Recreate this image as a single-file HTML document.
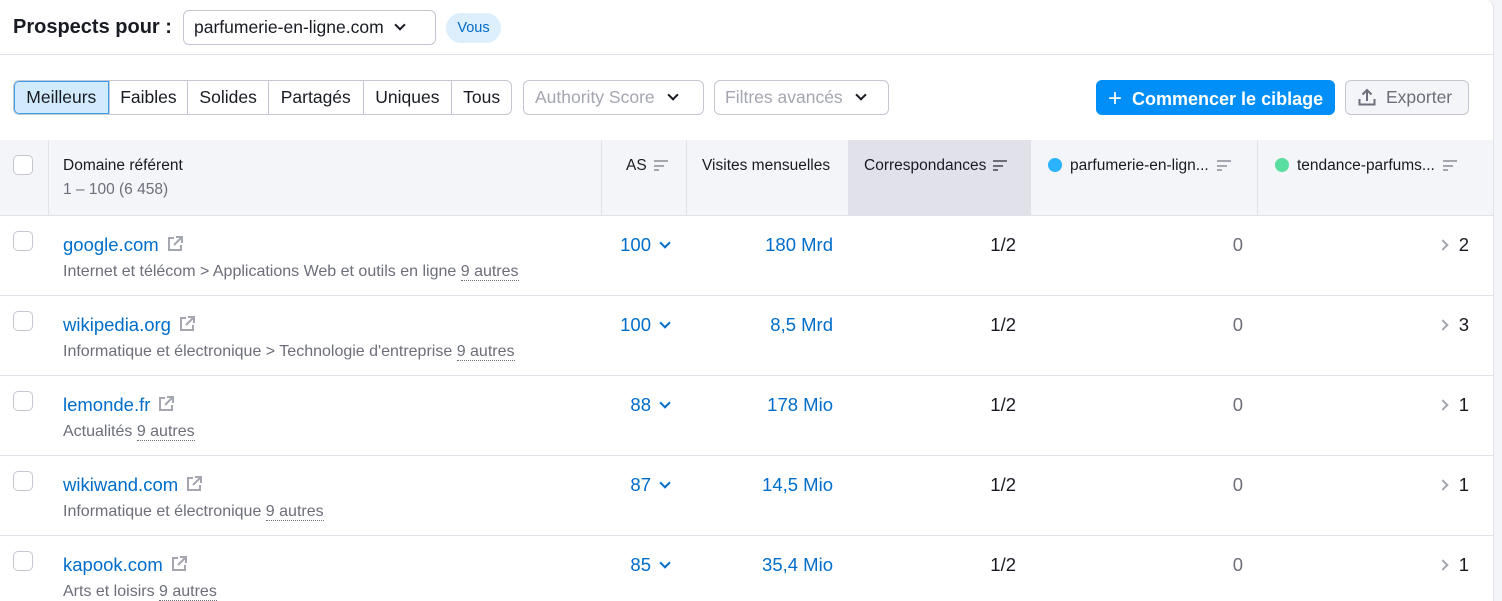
<!DOCTYPE html>
<html><head><meta charset="utf-8"><style>
*{box-sizing:border-box;margin:0;padding:0}
html,body{width:1502px;height:601px;overflow:hidden}
body{background:#f4f5f9;font-family:"Liberation Sans",sans-serif;color:#191b23;position:relative}
.main{position:absolute;left:0;top:0;width:1494px;height:601px;background:#fff;border-right:1px solid #e0e1e9;border-top-right-radius:8px;overflow:hidden}
.a{position:absolute;white-space:nowrap}
.btn{position:absolute;top:80px;height:35px;border:1px solid #c4c7cf;border-radius:6px;font-size:17.5px;line-height:33px}
.seg{display:flex;left:13px;overflow:hidden;width:499px}
.seg div{text-align:center;border-left:1px solid #c4c7cf}
.seg div:first-child{border-left:0;background:#d2ebfc;box-shadow:inset 0 0 0 1px #3b9cf0;border-radius:5px 0 0 5px}
.chev{display:inline-block;width:8px;height:8px;border-right:2.5px solid #191b23;border-bottom:2.5px solid #191b23;transform:rotate(45deg);margin-left:14px;position:relative;top:-4px}
.hdr{position:absolute;left:0;top:140px;width:1494px;height:76px;background:#f4f5f9;border-bottom:1px solid #e0e1e9}
.vl{position:absolute;top:0;width:1px;height:76px;background:#e0e1e9}
.h{position:absolute;top:17px;font-size:15.5px;color:#191b23}
.sort{display:inline-block;width:14px;height:11px;margin-left:7px;vertical-align:-1px;background:linear-gradient(#a4a6b0,#a4a6b0) 0 0/14px 2px no-repeat,linear-gradient(#a4a6b0,#a4a6b0) 0 4.5px/10px 2px no-repeat,linear-gradient(#a4a6b0,#a4a6b0) 0 9px/5px 2px no-repeat}
.cb{position:absolute;left:13px;width:20px;height:20px;border:1px solid #c4c7cf;border-radius:5px;background:#fff}
.row{position:absolute;left:0;width:1494px;height:80px;border-bottom:1px solid #e0e1e9}
.dom{position:absolute;left:63px;top:18px;font-size:18.5px;color:#006dca}
.sub{position:absolute;left:63px;top:47px;font-size:16px;color:#6c6e79}
.sub u{text-decoration:none;border-bottom:1px dotted #6c6e79}
.num{position:absolute;top:18px;font-size:18.5px}
.ext{display:inline-block;vertical-align:-2px;margin-left:7px}
.bch{display:inline-block;width:8px;height:8px;border-right:2.5px solid #006dca;border-bottom:2.5px solid #006dca;transform:rotate(45deg);margin-left:10px;position:relative;top:-4px}
.rch{display:inline-block;width:8px;height:8px;border-right:2px solid #a4a6b0;border-top:2px solid #a4a6b0;transform:rotate(45deg);margin-right:12px;position:relative;top:-2px}
</style></head><body>
<div class="main">
<div class="a" style="left:13px;top:16px;font-size:20px;font-weight:bold">Prospects pour :</div>
<div class="a" style="left:183px;top:10px;width:253px;height:35px;border:1px solid #c4c7cf;border-radius:6px;font-size:17.5px;line-height:33px;padding-left:10px">parfumerie-en-ligne.com<span class="chev" style="margin-left:12px"></span></div>
<div class="a" style="left:446px;top:13px;width:55px;height:30px;border-radius:15px;background:#ddeefc;color:#006dca;font-size:14.5px;line-height:30px;text-align:center">Vous</div>
<div class="a" style="left:0;top:54px;width:1494px;height:1px;background:#e0e1e9"></div>

<div class="btn seg"><div style="width:95px">Meilleurs</div><div style="width:79px">Faibles</div><div style="width:81px">Solides</div><div style="width:95px">Partagés</div><div style="width:89px">Uniques</div><div style="width:60px">Tous</div></div>
<div class="btn" style="left:523px;width:181px;padding-left:11px;color:#a4a6b0">Authority Score<span class="chev"></span></div>
<div class="btn" style="left:714px;width:175px;padding-left:10px;color:#a4a6b0">Filtres avancés<span class="chev"></span></div>
<div class="btn" style="left:1096px;width:239px;border:0;background:#008ff8;color:#fff;font-weight:bold;font-size:18px;padding-left:12px;line-height:35px"><span style="font-weight:normal;font-size:24px;position:relative;top:1px;margin-right:10px">+</span>Commencer le ciblage</div>
<div class="btn" style="left:1345px;width:124px;background:#f4f5f9;color:#6c6e79;padding-left:12px"><svg width="18" height="18" viewBox="0 0 18 18" style="vertical-align:-3px;margin-right:10px"><path d="M9 13V2M4.5 6.5L9 2l4.5 4.5M1.5 11v5.5h15V11" fill="none" stroke="#6c6e79" stroke-width="2"/></svg>Exporter</div>

<div class="hdr">
<div class="cb" style="top:15px"></div>
<div class="vl" style="left:48px"></div>
<div class="h" style="left:63px">Domaine référent</div>
<div class="h" style="left:63px;top:41px;color:#6c6e79">1 – 100 (6 458)</div>
<div class="vl" style="left:601px"></div>
<div class="h" style="left:626px">AS<span class="sort"></span></div>
<div class="vl" style="left:686px"></div>
<div class="h" style="left:702px">Visites mensuelles</div>
<div style="position:absolute;left:848px;top:0;width:183px;height:75px;background:#e0e1e9"></div>
<div class="h" style="left:864px">Correspondances<span class="sort" style="background:linear-gradient(#6c6e79,#6c6e79) 0 0/14px 2px no-repeat,linear-gradient(#6c6e79,#6c6e79) 0 4.5px/10px 2px no-repeat,linear-gradient(#6c6e79,#6c6e79) 0 9px/5px 2px no-repeat"></span></div>
<div class="h" style="left:1048px"><span style="display:inline-block;width:14px;height:14px;border-radius:50%;background:#2bb3ff;vertical-align:-2px;margin-right:8px"></span>parfumerie-en-lign...<span class="sort" style="margin-left:8px"></span></div>
<div class="vl" style="left:1257px"></div>
<div class="h" style="left:1275px"><span style="display:inline-block;width:14px;height:14px;border-radius:50%;background:#59dda0;vertical-align:-2px;margin-right:8px"></span>tendance-parfums...<span class="sort" style="margin-left:8px"></span></div>
</div>

<div class="row" style="top:216px"><div class="cb" style="top:15px"></div><div class="dom">google.com<svg class="ext" width="18" height="18" viewBox="0 0 18 18"><path d="M8 3H3v12h12v-5M10 2h6v6M16 2L8 10" fill="none" stroke="#a4a6b0" stroke-width="2"/></svg></div><div class="sub">Internet et télécom &gt; Applications Web et outils en ligne <u>9 autres</u></div><div class="num" style="right:825px;color:#006dca">100<span class="bch"></span></div><div class="num" style="right:661px;color:#006dca">180 Mrd</div><div class="num" style="right:478px">1/2</div><div class="num" style="right:251px;color:#6c6e79">0</div><div class="num" style="right:25px"><span class="rch"></span>2</div></div>
<div class="row" style="top:296px"><div class="cb" style="top:15px"></div><div class="dom">wikipedia.org<svg class="ext" width="18" height="18" viewBox="0 0 18 18"><path d="M8 3H3v12h12v-5M10 2h6v6M16 2L8 10" fill="none" stroke="#a4a6b0" stroke-width="2"/></svg></div><div class="sub">Informatique et électronique &gt; Technologie d'entreprise <u>9 autres</u></div><div class="num" style="right:825px;color:#006dca">100<span class="bch"></span></div><div class="num" style="right:661px;color:#006dca">8,5 Mrd</div><div class="num" style="right:478px">1/2</div><div class="num" style="right:251px;color:#6c6e79">0</div><div class="num" style="right:25px"><span class="rch"></span>3</div></div>
<div class="row" style="top:376px"><div class="cb" style="top:15px"></div><div class="dom">lemonde.fr<svg class="ext" width="18" height="18" viewBox="0 0 18 18"><path d="M8 3H3v12h12v-5M10 2h6v6M16 2L8 10" fill="none" stroke="#a4a6b0" stroke-width="2"/></svg></div><div class="sub">Actualités <u>9 autres</u></div><div class="num" style="right:825px;color:#006dca">88<span class="bch"></span></div><div class="num" style="right:661px;color:#006dca">178 Mio</div><div class="num" style="right:478px">1/2</div><div class="num" style="right:251px;color:#6c6e79">0</div><div class="num" style="right:25px"><span class="rch"></span>1</div></div>
<div class="row" style="top:456px"><div class="cb" style="top:15px"></div><div class="dom">wikiwand.com<svg class="ext" width="18" height="18" viewBox="0 0 18 18"><path d="M8 3H3v12h12v-5M10 2h6v6M16 2L8 10" fill="none" stroke="#a4a6b0" stroke-width="2"/></svg></div><div class="sub">Informatique et électronique <u>9 autres</u></div><div class="num" style="right:825px;color:#006dca">87<span class="bch"></span></div><div class="num" style="right:661px;color:#006dca">14,5 Mio</div><div class="num" style="right:478px">1/2</div><div class="num" style="right:251px;color:#6c6e79">0</div><div class="num" style="right:25px"><span class="rch"></span>1</div></div>
<div class="row" style="top:536px;border:0"><div class="cb" style="top:15px"></div><div class="dom">kapook.com<svg class="ext" width="18" height="18" viewBox="0 0 18 18"><path d="M8 3H3v12h12v-5M10 2h6v6M16 2L8 10" fill="none" stroke="#a4a6b0" stroke-width="2"/></svg></div><div class="sub">Arts et loisirs <u>9 autres</u></div><div class="num" style="right:825px;color:#006dca">85<span class="bch"></span></div><div class="num" style="right:661px;color:#006dca">35,4 Mio</div><div class="num" style="right:478px">1/2</div><div class="num" style="right:251px;color:#6c6e79">0</div><div class="num" style="right:25px"><span class="rch"></span>1</div></div>
</div>
</body></html>
